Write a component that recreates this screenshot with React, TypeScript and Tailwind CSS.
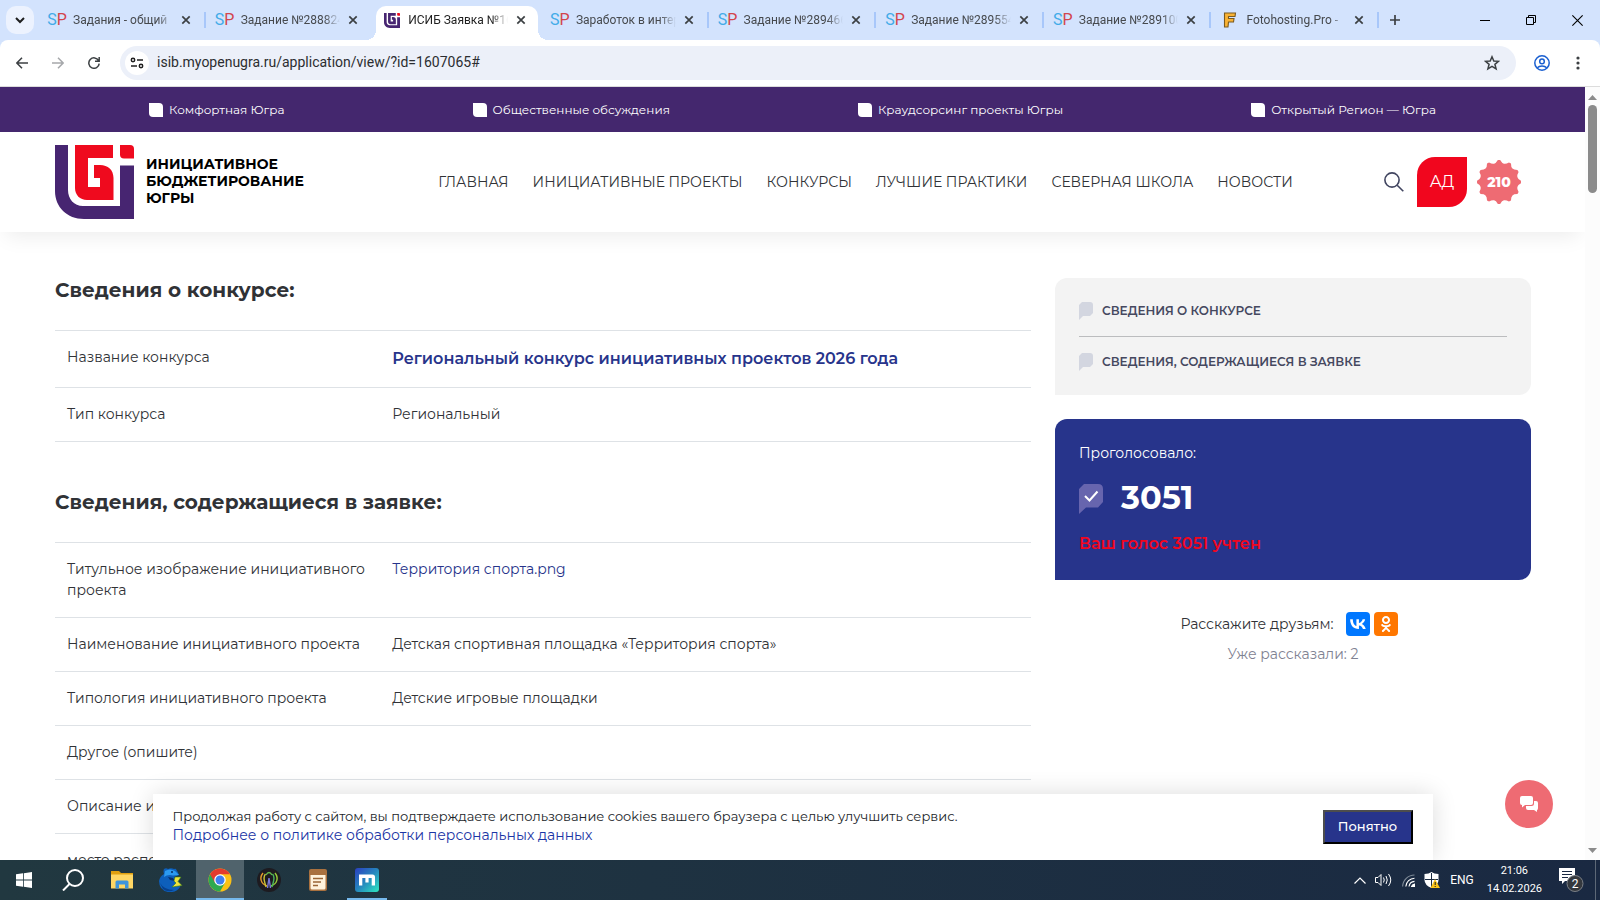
import type { ReactNode } from "react";
import { FaOdnoklassniki } from "react-icons/fa6";

/* ---------- small drawings ---------- */

function LogoMark({ className, inner = "#ef0a1e" }: { className?: string; inner?: string }) {
  return (
    <svg viewBox="0 0 79 74" className={className} aria-hidden="true">
      <path fill="#472571" d="M0 0H13V45C13 54 19 61 28 61H65V20.5H79V74H29C12 74 0 62 0 46Z" />
      <path
        fill={inner}
        d="M20 0H58V13H33V42H45V33H39V20H45C53 20 58.500 25 58.500 33V55H32C25 55 20 50 20 43Z"
      />
      <path fill="#ef0a1e" d="M65 0H75Q79 0 79 4V13.500H69Q65 13.500 65 9.500Z" />
    </svg>
  );
}

function Close() {
  return (
    <svg viewBox="0 0 10 10" className="size-[10px]" stroke="#3c4043" strokeWidth="1.7" aria-hidden="true">
      <path d="M1.300 1.300 8.700 8.700M8.700 1.300 1.300 8.700" />
    </svg>
  );
}

function SpIcon() {
  return (
    <span className="text-[16px] leading-4" aria-hidden="true">
      <span className="text-[#42abe8]">S</span>
      <span className="text-[#d2454d]">P</span>
    </span>
  );
}

function FotoIcon() {
  return (
    <svg viewBox="0 0 16 16" className="size-4" aria-hidden="true">
      <path
        d="M2.500 1H13.500L13 4.500H6.500V6.500H12L11.500 10H6.500L6 15H2.500Z"
        fill="#f9b233"
        stroke="#7a5a20"
        strokeWidth="1.100"
      />
    </svg>
  );
}

function Burst() {
  const n = 12;
  const point = (deg: number, r: number) => {
    const a = (deg * Math.PI) / 180;
    return `${(22 + r * Math.sin(a)).toFixed(2)} ${(22 - r * Math.cos(a)).toFixed(2)}`;
  };
  let d = "";
  for (let i = 0; i < n; i++) {
    const a = (i * 360) / n;
    d += `${i === 0 ? "M" : "L"}${point(a - 3, 22)} L${point(a + 3, 22)} Q${point(a + 9, 19)} ${point(a + 15, 19)} Q${point(a + 21, 19)} ${point(a + 27, 22)} `;
  }
  return (
    <svg viewBox="0 0 44 44" className="col-start-1 row-start-1 size-11" aria-hidden="true">
      <path d={`${d}Z`} fill="#ee6b73" />
    </svg>
  );
}

/* ---------- browser window ---------- */

type TabInfo = { title: string; icon: "sp" | "isib" | "foto"; active?: boolean; divider?: boolean };

const tabs: TabInfo[] = [
  { title: "Задания - общий", icon: "sp", divider: true },
  { title: "Задание №288824", icon: "sp" },
  { title: "ИСИБ Заявка №16", icon: "isib", active: true },
  { title: "Заработок в интер", icon: "sp", divider: true },
  { title: "Задание №289466", icon: "sp", divider: true },
  { title: "Задание №289554", icon: "sp", divider: true },
  { title: "Задание №289100", icon: "sp", divider: true },
  { title: "Fotohosting.Pro -", icon: "foto", divider: true },
];

function Tab({ tab }: { tab: TabInfo }) {
  return (
    <div className="relative flex h-full min-w-0 flex-1 items-center">
      {tab.active && (
        <span className="absolute inset-x-[3px] top-[6px] bottom-0 rounded-t-[10px] bg-white">
          <span className="absolute bottom-0 -left-[10px] size-[10px] bg-[radial-gradient(circle_at_0_0,transparent_10px,white_10px)]" />
          <span className="absolute -right-[10px] bottom-0 size-[10px] bg-[radial-gradient(circle_at_100%_0,transparent_10px,white_10px)]" />
        </span>
      )}
      <button className="relative flex min-w-0 flex-1 items-center gap-2 pl-[11px]">
        <span className="flex w-4 shrink-0 justify-center">
          {tab.icon === "sp" && <SpIcon />}
          {tab.icon === "foto" && <FotoIcon />}
          {tab.icon === "isib" && <LogoMark className="h-[15px] w-4" inner="#472571" />}
        </span>
        <span
          className={`min-w-0 flex-1 overflow-hidden text-left text-[12px] leading-4 whitespace-nowrap [mask-image:linear-gradient(to_right,black_84%,transparent)] ${
            tab.active ? "text-[#1f1f1f]" : "text-[#46494d]"
          }`}
        >
          {tab.title}
        </span>
      </button>
      <button aria-label="Закрыть вкладку" className="relative mr-[13px] ml-2">
        <Close />
      </button>
      <span className={`h-4 w-[2px] ${tab.divider ? "bg-[#a8c7fa]" : ""}`} />
    </div>
  );
}

function TabStrip() {
  return (
    <div className="flex h-10 shrink-0 items-center bg-[#d3e3fd]">
      <button aria-label="Поиск вкладок" className="ml-[6px] flex size-7 items-center justify-center rounded-[10px] bg-[#ecf2fe]">
        <svg viewBox="0 0 10 10" className="size-[10px]" fill="none" stroke="#1f1f1f" strokeWidth="2">
          <path d="M1 3 5 7 9 3" />
        </svg>
      </button>
      <div className="ml-1 flex h-full w-[1341px] min-w-0">
        {tabs.map((t) => (
          <Tab key={t.title} tab={t} />
        ))}
      </div>
      <button aria-label="Новая вкладка" className="ml-[10px]">
        <svg viewBox="0 0 12 12" className="size-3" stroke="#3c4043" strokeWidth="1.700">
          <path d="M6 1V11M1 6H11" />
        </svg>
      </button>
      <div className="ml-auto flex items-center gap-9 pr-[17px] text-black">
        <button aria-label="Свернуть">
          <svg viewBox="0 0 10 10" className="size-[10px]" stroke="currentColor">
            <path d="M0 5.500H10" />
          </svg>
        </button>
        <button aria-label="Развернуть">
          <svg viewBox="0 0 10 10" className="size-[10px]" fill="none" stroke="currentColor">
            <path d="M.5 2.500H7.500V9.500H.5ZM2.500 2.500V.5H9.500V7.500H7.500" />
          </svg>
        </button>
        <button aria-label="Закрыть">
          <svg viewBox="0 0 10 10" className="size-[11px]" stroke="currentColor">
            <path d="M.3.3 9.700 9.700M9.700.3.3 9.700" />
          </svg>
        </button>
      </div>
    </div>
  );
}

function Toolbar() {
  return (
    <div className="shrink-0 bg-[#d3e3fd]">
      <div className="flex h-[47px] items-center rounded-t-[8px] border-b border-[#dcdcdc] bg-white pb-[1px]">
        <div className="flex items-center gap-6 pl-4">
          <button aria-label="Назад">
            <svg viewBox="0 0 12 12" className="size-3" fill="none" stroke="#3c4043" strokeWidth="1.500">
              <path d="M12 6H1M6 .8.9 6 6 11.200" />
            </svg>
          </button>
          <button aria-label="Вперёд">
            <svg viewBox="0 0 12 12" className="size-3" fill="none" stroke="#a6a8ab" strokeWidth="1.500">
              <path d="M0 6H11M6 .8 11.100 6 6 11.200" />
            </svg>
          </button>
          <button aria-label="Обновить">
            <svg viewBox="0 0 12 12" className="size-3" fill="none" stroke="#3c4043" strokeWidth="1.500">
              <path d="M10.600 3.600A5.200 5.200 0 1 0 11.200 6.600M11.200 0V4.200H7" />
            </svg>
          </button>
        </div>
        <div className="ml-5 flex h-[34px] min-w-0 flex-1 items-center gap-2 rounded-full bg-[#ecf0f9] pr-4 pl-[5px]">
          <button aria-label="Сведения о сайте" className="flex size-6 shrink-0 items-center justify-center rounded-full bg-white">
            <svg viewBox="0 0 14 12" className="h-3 w-[14px]" fill="none" stroke="#1f1f1f" strokeWidth="1.500">
              <circle cx="3" cy="3" r="1.700" />
              <path d="M7 3H13M1 9H7" />
              <circle cx="11" cy="9" r="1.700" />
            </svg>
          </button>
          <input
            aria-label="Адресная строка"
            defaultValue="isib.myopenugra.ru/application/view/?id=1607065#"
            className="min-w-0 flex-1 bg-transparent text-[14px] text-[#2b2d30] outline-none"
          />
          <button aria-label="Добавить в закладки">
            <svg viewBox="0 0 16 16" className="size-4" fill="none" stroke="#3c4043" strokeWidth="1.500">
              <path d="M8 1.800 9.800 6 14.500 6.300 10.900 9.300 12.100 13.900 8 11.400 3.900 13.900 5.100 9.300 1.500 6.300 6.200 6Z" />
            </svg>
          </button>
        </div>
        <button aria-label="Профиль" className="ml-[18px]">
          <svg viewBox="0 0 16 16" className="size-4" fill="none" stroke="#1a5fd0" strokeWidth="1.500">
            <circle cx="8" cy="8" r="7.200" />
            <circle cx="8" cy="6.400" r="2.300" />
            <path d="M3.300 12.800C5.500 10.300 10.500 10.300 12.700 12.800" />
          </svg>
        </button>
        <button aria-label="Меню" className="mr-5 ml-[26px]">
          <svg viewBox="0 0 4 14" className="h-[14px] w-1" fill="#3c4043">
            <circle cx="2" cy="2" r="1.600" />
            <circle cx="2" cy="7" r="1.600" />
            <circle cx="2" cy="12" r="1.600" />
          </svg>
        </button>
      </div>
    </div>
  );
}

/* ---------- site ---------- */

const topLinks = ["Комфортная Югра", "Общественные обсуждения", "Краудсорсинг проекты Югры", "Открытый Регион — Югра"];
const navLinks = ["ГЛАВНАЯ", "ИНИЦИАТИВНЫЕ ПРОЕКТЫ", "КОНКУРСЫ", "ЛУЧШИЕ ПРАКТИКИ", "СЕВЕРНАЯ ШКОЛА", "НОВОСТИ"];

function SiteHeader() {
  return (
    <header className="relative shadow-[0_10px_20px_-6px_rgba(0,0,0,0.08)]">
      <div className="flex h-[45px] items-center justify-around bg-[#44276e] px-[55px]">
        {topLinks.map((t) => (
          <a key={t} href="#" className="flex items-center gap-[6px] text-[12px] leading-4 text-white">
            <span className="size-[14px] rounded-tr-[4px] rounded-bl-[4px] bg-white" />
            {t}
          </a>
        ))}
      </div>
      <div className="flex h-[100px] items-center justify-between bg-white pr-[64px] pl-[55px]">
        <a href="#" className="flex w-[292px] items-center gap-3 text-[14px] leading-[17px] font-bold text-black">
          <LogoMark className="h-[74px] w-[79px] shrink-0" />
          <span className="pb-[2px]">
            ИНИЦИАТИВНОЕ
            <br />
            БЮДЖЕТИРОВАНИЕ
            <br />
            ЮГРЫ
          </span>
        </a>
        <nav className="flex gap-6 text-[14px] leading-5 whitespace-nowrap text-[#303236]">
          {navLinks.map((t) => (
            <a key={t} href="#">
              {t}
            </a>
          ))}
        </nav>
        <div className="flex items-center">
          <button aria-label="Поиск">
            <svg viewBox="0 0 20 20" className="size-5" fill="none" stroke="#414560" strokeWidth="1.600">
              <circle cx="8" cy="8" r="7.100" />
              <path d="M13.200 13.200 19.300 19.300" />
            </svg>
          </button>
          <button className="ml-[13px] size-[50px] rounded-tl-[18px] rounded-br-[18px] bg-[#f1061e] text-[16px] text-white">АД</button>
          <span className="ml-[10px] grid place-items-center text-[14px] font-extrabold text-white">
            <Burst />
            <span className="relative col-start-1 row-start-1">210</span>
          </span>
        </div>
      </div>
    </header>
  );
}

function Row({ label, children }: { label: string; children?: ReactNode }) {
  return (
    <tr className="border-y border-[#dee2e6]">
      <th scope="row" className="w-1/3 px-3 py-4 text-left align-top font-normal">
        {label}
      </th>
      <td className="px-3 py-4 align-top">{children}</td>
    </tr>
  );
}

function Section({ title, children }: { title: string; children: ReactNode }) {
  return (
    <section>
      <h2 className="mb-7 text-[20px] leading-6 font-bold text-[#303236]">{title}</h2>
      <table className="w-full table-fixed border-collapse text-[14px] leading-[21px] text-[#303236]">
        <tbody>{children}</tbody>
      </table>
    </section>
  );
}

function SideLink({ children }: { children: string }) {
  return (
    <a href="#" className="flex items-center gap-[9px] text-[12px] leading-5 font-semibold text-[#45485f]">
      <svg viewBox="0 0 14 18" className="h-[18px] w-[14px] shrink-0" fill="#d3d6e0" aria-hidden="true">
        <path d="M3 0H11Q14 0 14 3V11L11 14H4L0 18V3Z" />
      </svg>
      {children}
    </a>
  );
}

function Sidebar() {
  return (
    <aside className="w-[476px] shrink-0">
      <nav className="rounded-[12px] rounded-bl-none bg-[#f3f3f3] px-6 pt-[23px] pb-[23px]">
        <div className="border-b border-[#bbbcbe] pb-[15px]">
          <SideLink>СВЕДЕНИЯ О КОНКУРСЕ</SideLink>
        </div>
        <div className="pt-[15px]">
          <SideLink>СВЕДЕНИЯ, СОДЕРЖАЩИЕСЯ В ЗАЯВКЕ</SideLink>
        </div>
      </nav>
      <div className="mt-6 rounded-[12px] rounded-bl-none bg-[#27348b] px-6 pt-6 pb-[26px] text-white">
        <p className="text-[14px] leading-5">Проголосовало:</p>
        <div className="mt-[15px] flex items-center gap-[18px]">
          <svg viewBox="0 0 24 32" className="h-8 w-6" aria-hidden="true">
            <path d="M5 2H19Q24 2 24 7V20L19 25.500H7L0 32V7Z" fill="#6765ae" />
            <path d="M6 14 10.500 18.500 18.500 9.500" fill="none" stroke="#fff" strokeWidth="2" />
          </svg>
          <strong className="text-[32px] leading-10 font-bold">3051</strong>
        </div>
        <p className="mt-4 text-[16px] leading-5 font-semibold text-[#f1061e]">Ваш голос 3051 учтен</p>
      </div>
      <div className="mt-8 flex items-center justify-center gap-1 pr-2 text-[14px] leading-5 text-[#303236]">
        <span className="mr-2">Расскажите друзьям:</span>
        <a href="#" aria-label="ВКонтакте" className="flex size-6 items-center justify-center rounded-[4px] bg-[#0077ff]">
          <svg viewBox="2 4 20.500 14.500" className="h-3 w-4" fill="#fff">
            <path d="M13.070 17.500c-6.830 0-10.730-4.680-10.890-12.480H5.600c.110 5.720 2.630 8.140 4.630 8.640V5.020h3.220v4.930c1.970-.210 4.050-2.460 4.750-4.930h3.220c-.540 3.040-2.790 5.290-4.380 6.210 1.600.750 4.160 2.710 5.130 6.270h-3.550c-.760-2.370-2.660-4.210-5.170-4.460v4.460z" />
          </svg>
        </a>
        <a href="#" aria-label="Одноклассники" className="flex size-6 items-center justify-center rounded-[4px] bg-[#ff7700] text-white">
          <FaOdnoklassniki className="size-4" />
        </a>
      </div>
      <p className="mt-2 text-center text-[14px] leading-5 text-[#7f8292]">Уже рассказали: 2</p>
    </aside>
  );
}

function CookieBar() {
  return (
    <div className="absolute inset-x-0 bottom-0 mx-auto flex h-[66px] w-[1280px] max-w-full items-center justify-between bg-white px-5 shadow-[0_0_24px_rgba(0,0,0,0.14)]">
      <div className="pb-[2px]">
        <p className="text-[13px] leading-[19px] text-[#212529]">
          Продолжая работу с сайтом, вы подтверждаете использование cookies вашего браузера с целью улучшить сервис.
        </p>
        <a href="#" className="block text-[14px] leading-[19px] text-[#1b35a5]">
          Подробнее о политике обработки персональных данных
        </a>
      </div>
      <button className="h-[34px] w-[90px] border-2 border-t-[#4d4d4d] border-r-black border-b-black border-l-[#4d4d4d] bg-[#27348b] text-[13px] font-medium text-white">
        Понятно
      </button>
    </div>
  );
}

function Site() {
  return (
    <div className="relative min-w-0 flex-1 overflow-hidden bg-white font-[Montserrat,Inter,sans-serif]">
      <SiteHeader />
      <main className="flex gap-6 pt-[46px] pr-[54px] pl-[55px]">
        <div className="min-w-0 flex-1 space-y-12">
          <Section title="Сведения о конкурсе:">
            <Row label="Название конкурса">
              <a href="#" className="text-[16px] leading-6 font-semibold text-[#27348b]">
                Региональный конкурс инициативных проектов 2026 года
              </a>
            </Row>
            <Row label="Тип конкурса">Региональный</Row>
          </Section>
          <Section title="Сведения, содержащиеся в заявке:">
            <Row label="Титульное изображение инициативного проекта">
              <a href="#" className="text-[#27348b]">
                Территория спорта.png
              </a>
            </Row>
            <Row label="Наименование инициативного проекта">Детская спортивная площадка «Территория спорта»</Row>
            <Row label="Типология инициативного проекта">Детские игровые площадки</Row>
            <Row label="Другое (опишите)" />
            <Row label="Описание инициативного проекта" />
            <Row label="место расположения" />
          </Section>
        </div>
        <Sidebar />
      </main>
      <CookieBar />
      <button aria-label="Чат" className="absolute right-8 bottom-8 flex size-12 items-center justify-center rounded-full bg-[#ee6b73]">
        <svg viewBox="0 0 18 16" className="h-4 w-[18px]" fill="#fff" aria-hidden="true">
          <path d="M2 0H11Q13 0 13 2V7Q13 9 11 9H5L2 11.500V9Q0 9 0 7V2Q0 0 2 0Z" />
          <path d="M14 5H16Q18 5 18 7V12Q18 14 17 14V16L14 14H8Q6 14 6 12V10H11.500Q14 10 14 7.500Z" />
        </svg>
      </button>
    </div>
  );
}

function Scrollbar() {
  return (
    <div className="flex w-[15px] shrink-0 flex-col items-center bg-[#fcfcfc] pt-2 pb-[7px]" aria-hidden="true">
      <svg viewBox="0 0 9 5" className="h-[5px] w-[9px]" fill="#8b8b8b">
        <path d="M0 5 4.500 0 9 5Z" />
      </svg>
      <span className="mt-[5px] h-[88px] w-[9px] rounded-full bg-[#8b8b8b]" />
      <svg viewBox="0 0 9 5" className="mt-auto h-[5px] w-[9px]" fill="#8b8b8b">
        <path d="M0 0H9L4.500 5Z" />
      </svg>
    </div>
  );
}

/* ---------- desktop taskbar ---------- */

function TaskButton({ label, state, children }: { label: string; state?: "active" | "open"; children: ReactNode }) {
  return (
    <button
      aria-label={label}
      className={`relative flex h-full w-12 items-center justify-center ${state === "active" ? "bg-[#50636c]" : ""}`}
    >
      {children}
      {state === "active" && <span className="absolute inset-x-0 bottom-0 h-[2px] bg-[#76b9ed]" />}
      {state === "open" && <span className="absolute inset-x-1 bottom-0 h-[2px] bg-[#76b9ed]" />}
    </button>
  );
}

function Taskbar() {
  return (
    <footer className="flex h-10 shrink-0 items-center bg-linear-to-r from-[#213840] to-[#1a2942] text-white">
      <div className="flex h-full gap-[1px]">
        <TaskButton label="Пуск">
          <svg viewBox="0 0 16 16" className="size-4" fill="#fff">
            <path d="M0 2.300 7 1.300V7.600H0ZM7.800 1.200 16 0V7.600H7.800ZM0 8.400H7V14.700L0 13.700ZM7.800 8.400H16V16L7.800 14.800Z" />
          </svg>
        </TaskButton>
        <TaskButton label="Поиск">
          <svg viewBox="0 0 22 22" className="size-[22px]" fill="none" stroke="#fff" strokeWidth="2">
            <circle cx="13" cy="9" r="8" />
            <path d="M7.500 15 1 21.500" />
          </svg>
        </TaskButton>
        <TaskButton label="Проводник">
          <svg viewBox="0 0 22 20" className="h-5 w-[22px]">
            <path d="M0 1H8L10 3H22V18H0Z" fill="#e0a010" />
            <path d="M0 4.500H22V18.500H0Z" fill="#ffd765" />
            <path d="M4.500 18.500V12Q4.500 10.500 6 10.500H16Q17.500 10.500 17.500 12V18.500H14V14.500H8V18.500Z" fill="#3f95dc" />
          </svg>
        </TaskButton>
        <TaskButton label="Медведь">
          <svg viewBox="0 0 24 24" className="size-6">
            <path d="M5 1Q7-.5 9 1 12-.5 15 1 17 0 17.500 2 19 4 20 7L15 9 17 12Q22 14 21 19 17 25 9 24 0 22 0 13 1 8 5 6 4 3 5 1Z" fill="#0d5fbb" />
            <path d="M6 3Q11 0 16 3L20 7 14 7.500Q9 6 5 9Z" fill="#2b9af0" />
            <path d="M1 15Q5 22 15 22 9 25 4 21Z" fill="#07418e" />
            <path d="M9 9 14 10 16 13 11 12Z" fill="#072f6b" />
            <path d="M16 9H22L19 13.500 23 17.500 13 19 17 15 15 13Z" fill="#f0e33c" stroke="#38811f" strokeWidth=".6" />
            <circle cx="13" cy="4" r="1" fill="#062b60" />
          </svg>
        </TaskButton>
        <TaskButton label="Google Chrome" state="active">
          <svg viewBox="0 0 48 48" className="size-6">
            <circle cx="24" cy="24" r="23" fill="#fbc116" />
            <path d="M24 24 34 29.700 24 47A23 23 0 0 1 4.100 12.500Z" fill="#2da94f" />
            <path d="M24 12.500H43.900A23 23 0 0 0 4.100 12.500L14 29.700Z" fill="#e33b2e" />
            <circle cx="24" cy="24" r="11.500" fill="#fff" />
            <circle cx="24" cy="24" r="9" fill="#3f7ff0" />
          </svg>
        </TaskButton>
        <TaskButton label="Браузер">
          <svg viewBox="0 0 24 24" className="size-6" fill="none" strokeWidth="1.400">
            <circle cx="12" cy="12" r="12" fill="#1d1b20" />
            <path d="M6 5C2 10 4 16 10 18" stroke="#e49a2c" />
            <path d="M18 5C22 10 20 16 14 18" stroke="#9acb38" />
            <path d="M8.500 6C5 10 8 14 9 19" stroke="#c9c338" />
            <path d="M15.500 6C19 10 16 14 15 19" stroke="#49b35c" />
            <path d="M10.500 20 12 10 13.500 20" stroke="#7a78d8" />
            <path d="M9 7Q12 2 15 7" stroke="#61b94c" />
          </svg>
        </TaskButton>
        <TaskButton label="Блокнот">
          <svg viewBox="0 0 18 22" className="h-[22px] w-[18px]">
            <rect width="18" height="22" rx="2" fill="#a9713f" />
            <path d="M1.500 6H16.500V19Q16.500 20.500 15 20.500H3Q1.500 20.500 1.500 19Z" fill="#fff3dd" />
            <path d="M4 9.500H14M4 13H12M4 16.500H9" stroke="#9a6536" strokeWidth="1.300" />
          </svg>
        </TaskButton>
        <TaskButton label="Maxthon" state="open">
          <svg viewBox="0 0 24 24" className="size-6">
            <defs>
              <linearGradient id="mx" x1="0" y1="0" x2="1" y2="1">
                <stop offset="0" stopColor="#2b3fc0" />
                <stop offset=".5" stopColor="#2587be" />
                <stop offset="1" stopColor="#2fe8c0" />
              </linearGradient>
            </defs>
            <rect width="24" height="24" rx="3" fill="url(#mx)" />
            <path d="M4 6.500H17.500Q20 6.500 20 9V17.500H16.700V10H13.600V14.500H10.400V10H7.300V17.500H4Z" fill="#fff" />
          </svg>
        </TaskButton>
      </div>
      <div className="ml-auto flex h-full items-center">
        <button aria-label="Скрытые значки">
          <svg viewBox="0 0 12 7" className="h-[7px] w-3" fill="none" stroke="#fff" strokeWidth="1.200">
            <path d="M.5 6.500 6 1 11.500 6.500" />
          </svg>
        </button>
        <svg viewBox="0 0 17 14" className="ml-[9px] h-[14px] w-[17px]" fill="none" stroke="#fff" aria-hidden="true">
          <path d="M.5 4.500H3L6 1.500V12.500L3 9.500H.5ZM8.500 4.500Q10 7 8.500 9.500M11 3Q13.500 7 11 11M13.500 1Q18 7 13.500 13" />
        </svg>
        <svg viewBox="0 0 13 13" className="ml-[10px] size-[13px]" fill="none" stroke="#fff" strokeWidth="1.100" aria-hidden="true">
          <path d="M.6 12.500A12 12 0 0 1 12.500 1" stroke="#7f8b98" />
          <path d="M3.800 12.500A9 9 0 0 1 12.500 4.200M7 12.500A6 6 0 0 1 12.500 7.400" />
          <path d="M9.600 12.500A3.500 3.500 0 0 1 12.500 10V12.500Z" fill="#fff" />
        </svg>
        <svg viewBox="0 0 16 17" className="ml-[9px] h-[17px] w-4" aria-hidden="true">
          <path d="M7.500 0Q10 2 14.500 2V8Q14.500 13 7.500 16 .5 13 .5 8V2Q5 2 7.500 0Z" fill="#fff" />
          <path d="M7.500 1V15M1 7.500H14" stroke="#1b2b42" />
          <path d="M11 7 16 16H6.500Z" fill="#fcc419" />
          <path d="M11.200 10V13M11.200 14V15" stroke="#1b1b1b" />
        </svg>
        <span className="ml-[10px] text-[12px] leading-4">ENG</span>
        <div className="ml-[13px] text-center text-[11px] leading-[18px]">
          <div>21:06</div>
          <div>14.02.2026</div>
        </div>
        <button aria-label="Уведомления" className="mr-[11px] ml-[17px] grid">
          <svg viewBox="0 0 25 24" className="col-start-1 row-start-1 h-6 w-[25px]">
            <path d="M0 0H16V13H6L3 16V13H0Z" fill="#fff" />
            <path d="M3 3.500H13M3 6.500H13M3 9.500H9" stroke="#1a2942" />
            <circle cx="16" cy="15.500" r="8" fill="#34383d" stroke="#7b8087" />
          </svg>
          <span className="relative col-start-1 row-start-1 mt-2 ml-[7px] text-center text-[12px] leading-4">2</span>
        </button>
        <span className="mr-1 h-full w-[1px] bg-[#5d6877]" />
      </div>
    </footer>
  );
}

export default function App() {
  return (
    <div className="flex h-screen flex-col overflow-hidden bg-white font-[Roboto,'Open_Sans',sans-serif]">
      <TabStrip />
      <Toolbar />
      <div className="flex min-h-0 flex-1">
        <Site />
        <Scrollbar />
      </div>
      <Taskbar />
    </div>
  );
}
